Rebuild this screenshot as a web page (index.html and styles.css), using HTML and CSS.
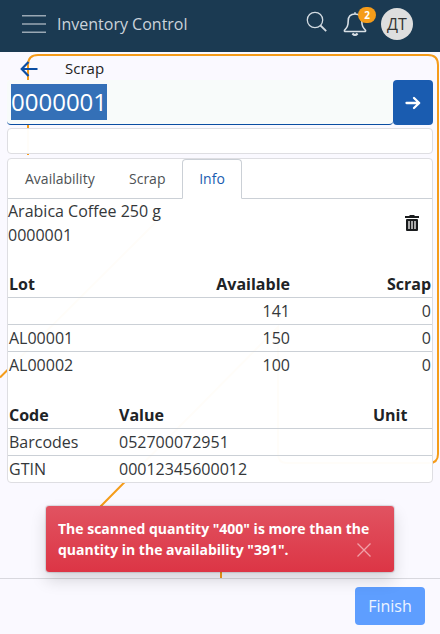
FILE: index.html
```html
<!DOCTYPE html>
<html lang="en">
<head>
<meta charset="utf-8">
<title>Inventory Control</title>
<link rel="stylesheet" href="styles.css">
</head>
<body>
<div class="app">
  <svg class="backdrop" viewBox="0 0 440 634" fill="none" stroke="#f59c1a" stroke-width="2">
    <path d="M28 155V65Q28 55 38 55H428Q438 55 438 65V454Q438 463 429 463H287Q278 463 278 454V327L100.500 506.500M0 377.500L162 216M221 560V578"/>
  </svg>
  <header class="topbar">
    <svg class="menu" viewBox="0 0 24 20" stroke="#9aa8b4" stroke-width="1.600"><path d="M0 1.800H24M0 10H24M0 18.200H24"/></svg>
    <h1>Inventory Control</h1>
    <svg class="search" viewBox="0 0 22 22" fill="none" stroke="#d2dae1" stroke-width="1.300"><circle cx="9" cy="9" r="7.700"/><path d="M14.500 14.500L20.200 20.200" stroke-width="1.800"/></svg>
    <div class="bell">
      <svg viewBox="0 0 24 26" fill="none" stroke="#d8dfe5" stroke-width="1.600" stroke-linejoin="round"><path d="M12 1.200V3M12 3C7.500 3 5.200 6 5.200 10C5.200 15 4 16.500 1.500 19.200Q1 20.500 2.600 20.500H21.400Q23 20.500 22.500 19.200C20 16.500 18.800 15 18.800 10C18.800 6 16.500 3 12 3Z"/><path d="M9.400 22.500Q12 25.500 14.600 22.500" stroke-width="2"/></svg>
      <span class="badge">2</span>
    </div>
    <span class="avatar">ДТ</span>
  </header>
  <main>
    <div class="titlebar">
      <svg viewBox="0 0 18 16" fill="none" stroke="#0b4ea2" stroke-width="2.200"><path d="M17.500 8H1.800M8.500 .9L1.700 8L8.500 15.100"/></svg>
      <h2>Scrap</h2>
    </div>
    <div class="scan">
      <div class="field"><span class="selected">0000001</span></div>
      <button class="go" aria-label="Submit"><svg viewBox="0 0 16 14" fill="none" stroke="#fff" stroke-width="2.300"><path d="M1.500 7H14M9 2L14.200 7L9 12" stroke-linecap="round" stroke-linejoin="round"/></svg></button>
    </div>
    <div class="message"></div>
    <section class="panel">
      <nav class="tabs"><a class="tab first">Availability</a><a class="tab second">Scrap</a><a class="tab active">Info</a></nav>
      <div class="product">
        <div>Arabica Coffee 250 g<br>0000001</div>
        <svg viewBox="0 0 14 16"><path fill="#191b1d" d="M4.500 0H9.500V1H14V3H0V1H4.500Z"/><rect x="1" y="4" width="12" height="12" rx="1" fill="#191b1d"/><path d="M4 6V14M7 6V14M10 6V14" stroke="#aaa" stroke-width="2"/></svg>
      </div>
      <table class="lots">
        <thead><tr><th>Lot</th><th>Available</th><th>Scrap</th></tr></thead>
        <tbody>
          <tr><td></td><td>141</td><td>0</td></tr>
          <tr><td>AL00001</td><td>150</td><td>0</td></tr>
          <tr><td>AL00002</td><td>100</td><td>0</td></tr>
        </tbody>
      </table>
      <table class="codes">
        <thead><tr><th>Code</th><th>Value</th><th>Unit</th></tr></thead>
        <tbody>
          <tr><td>Barcodes</td><td>052700072951</td><td></td></tr>
          <tr><td>GTIN</td><td>00012345600012</td><td></td></tr>
        </tbody>
      </table>
    </section>
  </main>
  <footer><button class="finish">Finish</button></footer>
  <div class="toast" role="alert">
    <span>The scanned quantity "400" is more than the<br>quantity in the availability "391".</span>
    <svg class="close" viewBox="0 0 14 14" stroke="#f0a0a8" stroke-width="1.300"><path d="M.5.5L13.500 13.500M13.500.5L.5 13.500"/></svg>
  </div>
</div>
</body>
</html>
```

FILE: styles.css
```css
* { box-sizing: border-box; }
body { margin: 0; font-family: "Open Sans", "Noto Sans", sans-serif; font-size: 16px; color: #34373a; }
h1, h2 { margin: 0; font-weight: 400; }
button { border: 0; padding: 0; font: inherit; }
.app { position: relative; width: 440px; height: 634px; overflow: hidden; background: #faf9ff; display: flex; flex-direction: column; }
.backdrop { position: absolute; inset: 0; width: 440px; height: 634px; }
.topbar, main, footer { position: relative; }
.topbar { height: 52px; flex: none; background: #1b3a52; display: flex; align-items: center; padding: 0 27px 4px 22px; }
.menu { width: 24px; height: 20px; }
.topbar h1 { margin-left: 11px; font-size: 16px; color: #cbd3da; flex: 1; }
.search { width: 22px; height: 22px; margin: -4px 15.500px 0 0; }
.bell { position: relative; width: 24px; height: 26px; margin-right: 14px; }
.bell svg { display: block; width: 24px; height: 26px; }
.badge { position: absolute; left: 15px; top: -4px; width: 18px; height: 16px; border-radius: 8px; background: #f59c1a; color: #fff; font-size: 10px; line-height: 16px; font-weight: 700; text-align: center; }
.avatar { width: 32px; height: 32px; border-radius: 50%; background: #dedede; color: #333; font-size: 16px; line-height: 33px; text-align: center; }
main { flex: 1; padding: 0 7px; }
.titlebar { height: 28px; display: flex; align-items: center; padding: 6px 0 0 13px; }
.titlebar svg { width: 18px; height: 16px; }
.titlebar h2 { margin: -2px 0 0 27px; font-size: 15px; line-height: 22px; color: #222; }
.scan { height: 45px; display: flex; }
.field { width: 386px; height: 45px; padding: 4px; background: #f8fbfa; border-bottom: 1px solid #0b4ea2; border-radius: 4px; }
.selected { display: block; width: 96px; height: 36px; background: #3470b7; color: #fff; font-size: 24px; line-height: 36px; }
.go { width: 40px; height: 45px; border-radius: 4px; background: #1a5cb0; display: flex; align-items: center; justify-content: center; }
.go svg { width: 16px; height: 14px; }
.message { height: 26px; margin-top: 3px; background: #fffffff9; border: 1px solid #dedee2; border-radius: 4px; }
.panel { height: 325px; margin-top: 4px; background: #fffffff9; border: 1px solid #dedee2; border-radius: 4px; }
.tabs { height: 40px; display: flex; border-bottom: 1px solid #cbd0d6; font-size: 14px; }
.tab { height: 40px; line-height: 39px; color: #4d5154; }
.first { width: 104px; padding-left: 17px; }
.second { width: 70px; padding-left: 17px; }
.active { width: 60px; line-height: 37px; color: #1a5cb0; text-align: center; border: 1px solid #cbd0d6; border-bottom-color: #fff; border-radius: 4px 4px 0 0; background: #fff; }
.product { height: 72px; display: flex; justify-content: space-between; line-height: 24px; }
.product svg { width: 14px; height: 16px; margin: 16px 13px 0 0; }
table { width: 100%; table-layout: fixed; border-collapse: separate; border-spacing: 0; line-height: 24px; }
th, td { padding: 1px; text-align: left; }
th { height: 26px; font-weight: 700; color: #202326; }
td { height: 27px; }
tbody td { border-top: 1px solid #cbd0d6; }
.lots th:nth-child(n+2), .lots td:nth-child(n+2) { text-align: right; }
.lots th:nth-child(-n+2) { width: 141.500px; }
.codes { margin-top: 24px; }
.codes th:first-child { width: 110px; }
.codes th:nth-child(2) { width: 254px; }
footer { height: 56px; flex: none; border-top: 1px solid #d8d8de; background: #faf9ff; padding: 8px 15px; display: flex; justify-content: flex-end; }
.finish { width: 70px; height: 38px; border-radius: 4px; background: #5e9eff; color: #edf4ff; }
.toast { position: absolute; left: 46px; top: 506px; width: 348px; height: 66px; padding: 12px; border-radius: 3px; background: linear-gradient(#e15361, #dc3545); box-shadow: 0 8px 16px #00000026, 0 0 1px 1px #0000001f; color: #fff; font-size: 14px; line-height: 21px; font-weight: 700; white-space: nowrap; }
.close { position: absolute; right: 23px; top: 37px; width: 14px; height: 14px; }
```
